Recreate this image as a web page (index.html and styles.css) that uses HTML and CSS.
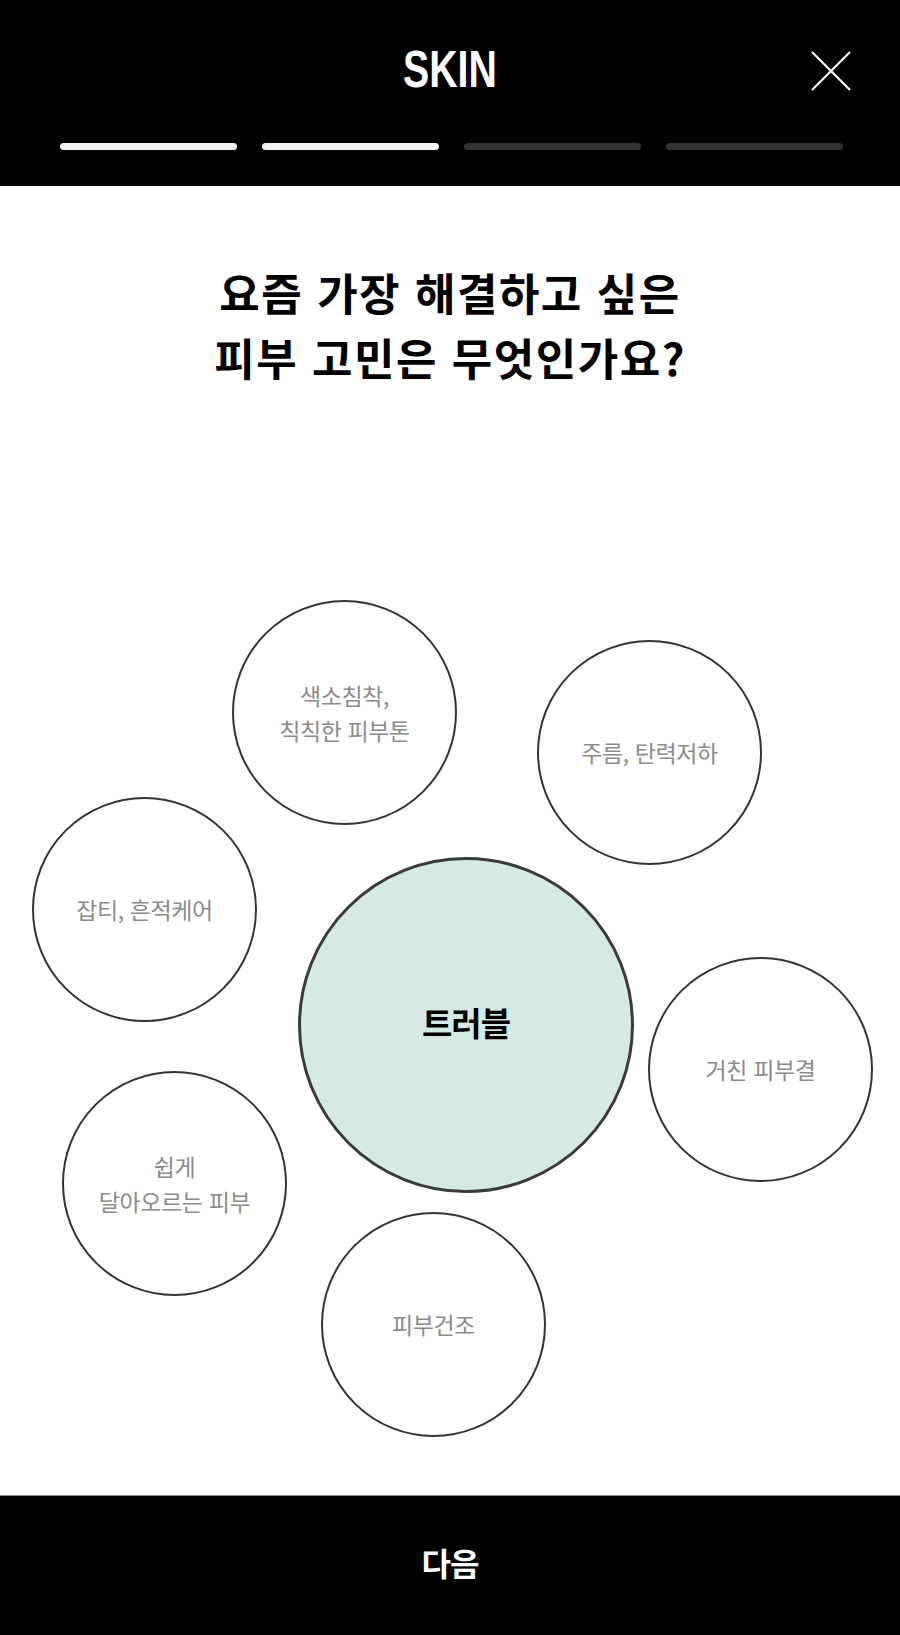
FILE: index.html
```html
<!DOCTYPE html>
<html lang="ko">
<head>
<meta charset="utf-8">
<title>SKIN</title>
<link rel="stylesheet" href="styles.css">
</head>
<body>
<div class="page">
  <header class="header">
    <div class="header-top">
      <h1 class="brand">SKIN</h1>
      <button class="close" aria-label="닫기">
        <svg width="40" height="40" viewBox="0 0 40 40"><path d="M1 1 L39 39 M39 1 L1 39" stroke="#fff" stroke-width="2.2" fill="none"/></svg>
      </button>
    </div>
    <div class="progress">
      <span class="step done"></span>
      <span class="step done"></span>
      <span class="step"></span>
      <span class="step"></span>
    </div>
  </header>

  <main class="main">
    <h2 class="question">요즘 가장 해결하고 싶은<br>피부 고민은 무엇인가요?</h2>
    <div class="canvas">
      <div class="bubble b1"><span>색소침착,<br>칙칙한 피부톤</span></div>
      <div class="bubble b2"><span>주름, 탄력저하</span></div>
      <div class="bubble b3"><span>잡티, 흔적케어</span></div>
      <div class="bubble big selected"><span>트러블</span></div>
      <div class="bubble b5"><span>거친 피부결</span></div>
      <div class="bubble b6"><span>쉽게<br>달아오르는 피부</span></div>
      <div class="bubble b7"><span>피부건조</span></div>
    </div>
  </main>

  <footer class="footer">
    <button class="next">다음</button>
  </footer>
</div>
</body>
</html>
```
FILE: styles.css
```css
* { box-sizing: border-box; }
html, body { margin: 0; padding: 0; background: #fff; }
body { font-family: "Noto Sans CJK KR", "Noto Sans", sans-serif; }

.page {
  width: 900px;
  height: 1635px;
  display: flex;
  flex-direction: column;
}

.header {
  background: #000;
  height: 186px;
  flex: none;
  display: flex;
  flex-direction: column;
}
.header-top {
  position: relative;
  height: 143px;
  display: flex;
  justify-content: center;
}
.brand {
  margin: 0;
  margin-top: 42px;
  color: #fff;
  font-family: "Liberation Sans", Arial, sans-serif;
  font-weight: 700;
  font-size: 51px;
  line-height: 56px;
  height: 56px;
  letter-spacing: 0;
  transform: scaleX(0.77);
}
.close {
  position: absolute;
  right: 49px;
  top: 51px;
  width: 40px;
  height: 40px;
  padding: 0;
  border: 0;
  background: none;
  display: block;
}
.close svg { display: block; }

.progress {
  display: flex;
  gap: 25px;
  padding: 0 57px 0 60px;
}
.step {
  flex: 1;
  height: 7px;
  border-radius: 4px;
  background: #333;
}
.step.done { background: #f2f2f2; }

.main {
  flex: 1;
  display: flex;
  flex-direction: column;
}
.question {
  margin: 0;
  padding-top: 74px;
  text-align: center;
  font-size: 44px;
  line-height: 65px;
  font-weight: 700;
  color: #000;
  letter-spacing: 1.5px;
}
.canvas {
  position: relative;
  flex: 1;
}

.bubble {
  position: absolute;
  width: 225px;
  height: 225px;
  border: 2px solid #333;
  border-radius: 50%;
  background: #fff;
  display: flex;
  align-items: center;
  justify-content: center;
  text-align: center;
  color: #8a8a8a;
  font-size: 23px;
  line-height: 35px;
  letter-spacing: -0.4px;
}
.bubble.b1 { left: 232px; top: 210px; }
.bubble.b2 { left: 537px; top: 250px; }
.bubble.b3 { left: 32px; top: 407px; }
.bubble.b5 { left: 648px; top: 567px; }
.bubble.b6 { left: 62px; top: 681px; }
.bubble.b7 { left: 321px; top: 822px; }

.bubble.big {
  left: 298px;
  top: 467px;
  width: 336px;
  height: 336px;
  border: 3.5px solid #3a3a3a;
  background: #d5eae5;
  color: #000;
  font-size: 33px;
  font-weight: 700;
  letter-spacing: -1px;
  padding-bottom: 6px;
}

.footer {
  flex: none;
  height: 140px;
  background: #000;
  border-top: 1px solid #888;
  display: flex;
  align-items: center;
  justify-content: center;
  padding-bottom: 8px;
}
.next {
  border: 0;
  background: none;
  color: #fff;
  font-family: "Noto Sans CJK KR", sans-serif;
  font-size: 32px;
  font-weight: 700;
  letter-spacing: -1px;
  padding: 0;
}
```
